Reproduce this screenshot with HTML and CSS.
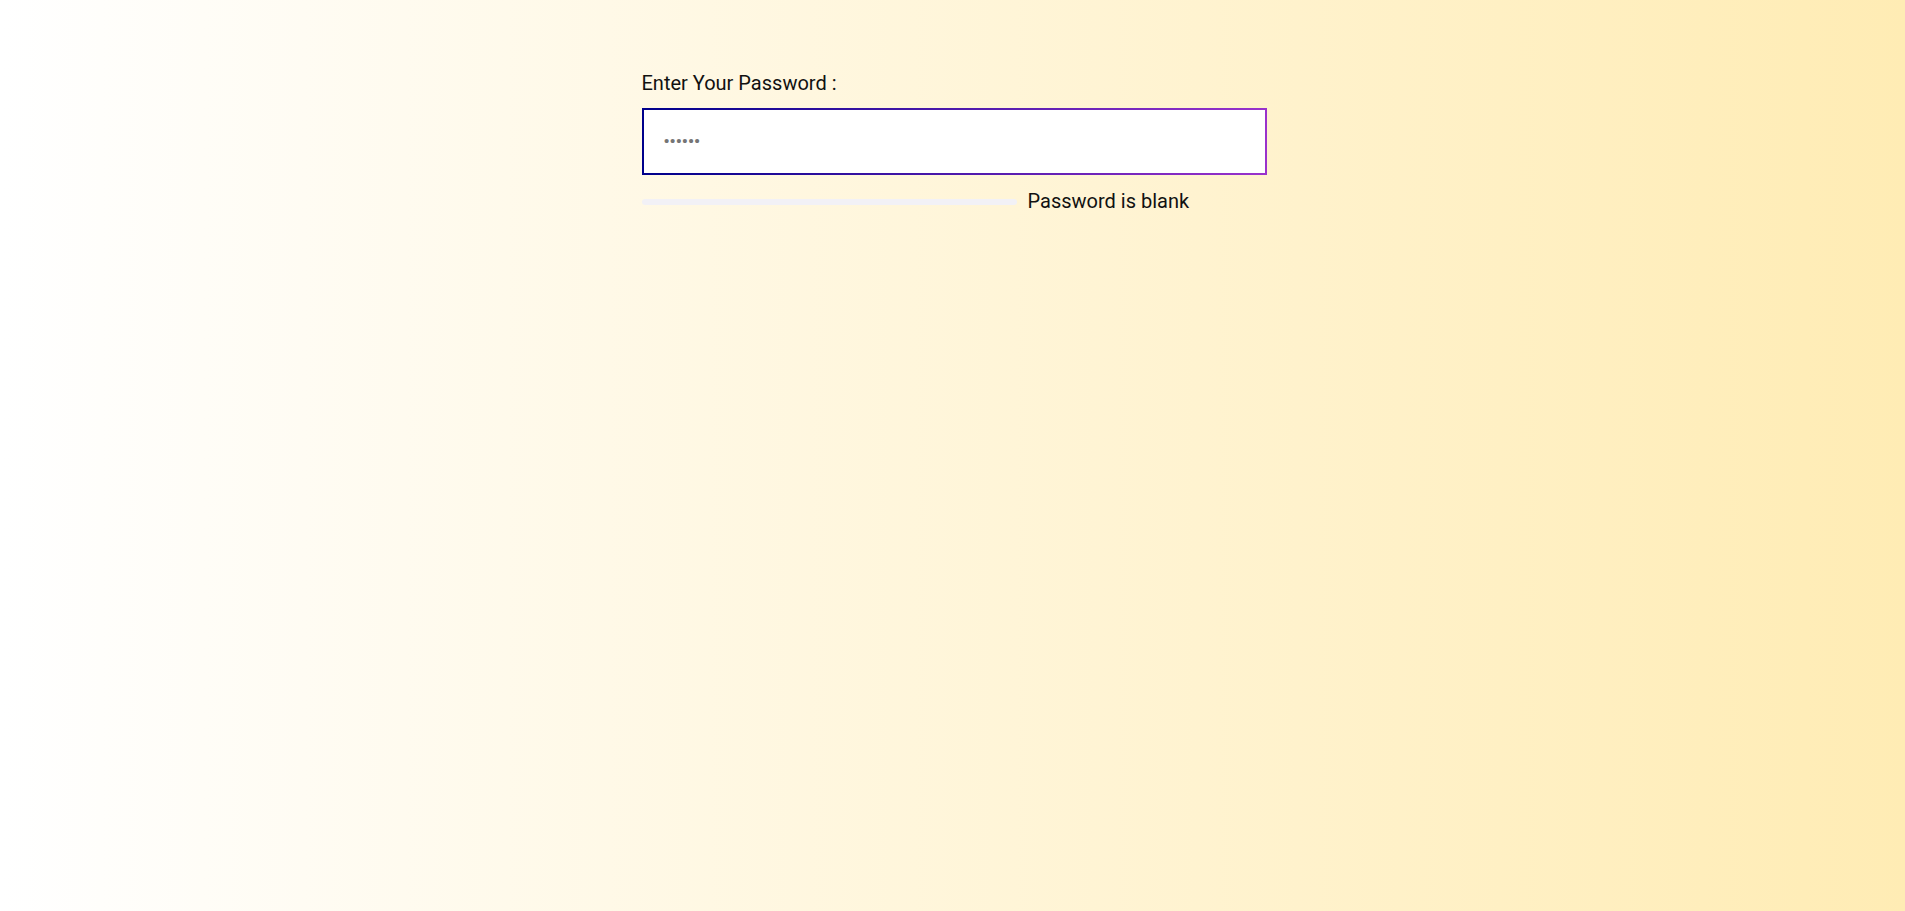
FILE: index.html
```html
<!DOCTYPE html>
<html lang="en">
<head>
<meta charset="utf-8">
<title>Password Strength</title>
<link rel="stylesheet" href="styles.css">
</head>
<body>
  <main class="page">
    <div class="form">
      <label class="label" for="pw">Enter Your Password :</label>
      <input class="input" id="pw" type="password" value="" placeholder="••••••">
      <div class="meter">
        <div class="bar"><div class="fill" style="width:0%"></div></div>
        <span class="status">Password is blank</span>
      </div>
    </div>
  </main>
</body>
</html>
```

FILE: styles.css
```css
html, body {
  margin: 0;
  padding: 0;
  height: 100%;
}
body {
  font-family: Roboto, "Liberation Sans", Arial, sans-serif;
  background: linear-gradient(to right, #ffffff, #ffecb4);
  color: #111;
}
.page {
  min-height: 100%;
  padding-top: 72px;
  box-sizing: border-box;
}
.form {
  width: 625px;
  margin-left: calc(50% - 311px);
  display: flex;
  flex-direction: column;
}
.label {
  font-size: 20px;
  line-height: 23px;
  margin-bottom: 13px;
}
.input {
  box-sizing: border-box;
  height: 67px;
  width: 100%;
  border: 2px solid;
  border-image: linear-gradient(to right, #00008b, #9932cc) 1;
  background: #fff;
  outline: none;
  padding: 0 20px;
  font-family: Roboto, "Liberation Sans", Arial, sans-serif;
  font-size: 16px;
  color: #555;
}
.input::placeholder {
  color: #757575;
  font-size: 17px;
  font-weight: 700;
  letter-spacing: 0;
}
.meter {
  margin-top: 15px;
  display: flex;
  align-items: center;
  gap: 11px;
}
.bar {
  width: 375px;
  height: 6px;
  border-radius: 3px;
  background: #f2f1f6;
  overflow: hidden;
}
.fill {
  height: 100%;
}
.status {
  font-size: 20px;
  line-height: 23px;
  color: #111;
}
```
